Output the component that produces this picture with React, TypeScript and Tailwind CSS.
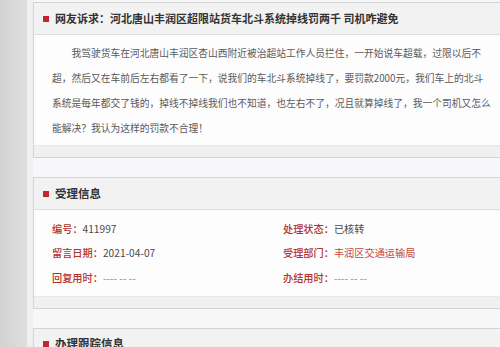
const lines = [
  "我驾驶货车在河北唐山丰润区杏山西附近被治超站工作人员拦住，一开始说车超载，过限以后不",
  "超，然后又在车前后左右都看了一下，说我们的车北斗系统掉线了，要罚款2000元，我们车上的北斗",
  "系统是每年都交了钱的，掉线不掉线我们也不知道，也左右不了，况且就算掉线了，我一个司机又怎么",
  "能解决？我认为这样的罚款不合理！",
];

function Header({ title, big }: { title: string; big?: boolean }) {
  return (
    <div className="h-[32px] bg-[#f2f2f3] border-b border-[#dddddd] flex items-center pl-[9px] gap-[6px]">
      <span className="w-[6px] h-[6px] bg-[#c1272d] shrink-0" />
      <span className={`font-bold text-[#333333] ${big ? "text-[11.5px]" : "text-[11px]"}`}>{title}</span>
    </div>
  );
}

function Footer() {
  return <div className="h-[12px] bg-[#f0f0f1] border-t border-[#e8e8e8]" />;
}

function Field({ label, value, tone }: { label: string; value: string; tone?: "red" | "gray" }) {
  const color = tone === "red" ? "text-[#c4453c]" : tone === "gray" ? "text-[#8a8a8a]" : "text-[#4a4a4a]";
  return (
    <div className="h-[24.5px] flex items-center whitespace-nowrap text-[10.2px]">
      <span className="text-[#b3332c] font-medium">{label}：</span>
      <span className={color}>{value}</span>
    </div>
  );
}

export default function App() {
  return (
    <div
      className="w-[500px] h-[347px] overflow-hidden flex bg-[#f7f7f9]"
      style={{ fontFamily: '"Noto Sans CJK SC", "Noto Sans", sans-serif' }}
    >
      <div className="w-[27px] shrink-0 bg-gradient-to-r from-[#d3d3d3] to-[#dedede]" />
      <div className="w-[6px] shrink-0 bg-[#efeff0]" />
      <div className="flex flex-col pt-[2px] gap-[19px]">
        <div className="w-[480px] border border-[#d4d4d4] bg-white">
          <Header title="网友诉求：河北唐山丰润区超限站货车北斗系统掉线罚两千 司机咋避免" />
          <div className="pl-[18px] pt-[5.5px] pb-[4.5px] bg-[#fdfdfe] text-[9.75px] leading-[25px] text-[#595959]">
            {lines.map((l, i) => (
              <div key={i} className={`whitespace-nowrap ${i === 0 ? "pl-[19.5px]" : ""}`}>
                {l}
              </div>
            ))}
          </div>
          <Footer />
        </div>

        <div className="w-[480px] border border-[#d4d4d4] bg-white">
          <Header title="受理信息" big />
          <div className="grid grid-cols-[231px_1fr] pl-[18px] pt-[6px] pb-[6px] bg-[#fdfdfe]">
            <Field label="编号" value="411997" />
            <Field label="处理状态" value="已核转" />
            <Field label="留言日期" value="2021-04-07" />
            <Field label="受理部门" value="丰润区交通运输局" tone="red" />
            <Field label="回复用时" value="---- -- --" tone="gray" />
            <Field label="办结用时" value="---- -- --" tone="gray" />
          </div>
          <Footer />
        </div>

        <div className="w-[480px] border border-[#d4d4d4] bg-white">
          <Header title="办理跟踪信息" big />
          <div className="h-[40px] bg-[#fdfdfe]" />
        </div>
      </div>
    </div>
  );
}
